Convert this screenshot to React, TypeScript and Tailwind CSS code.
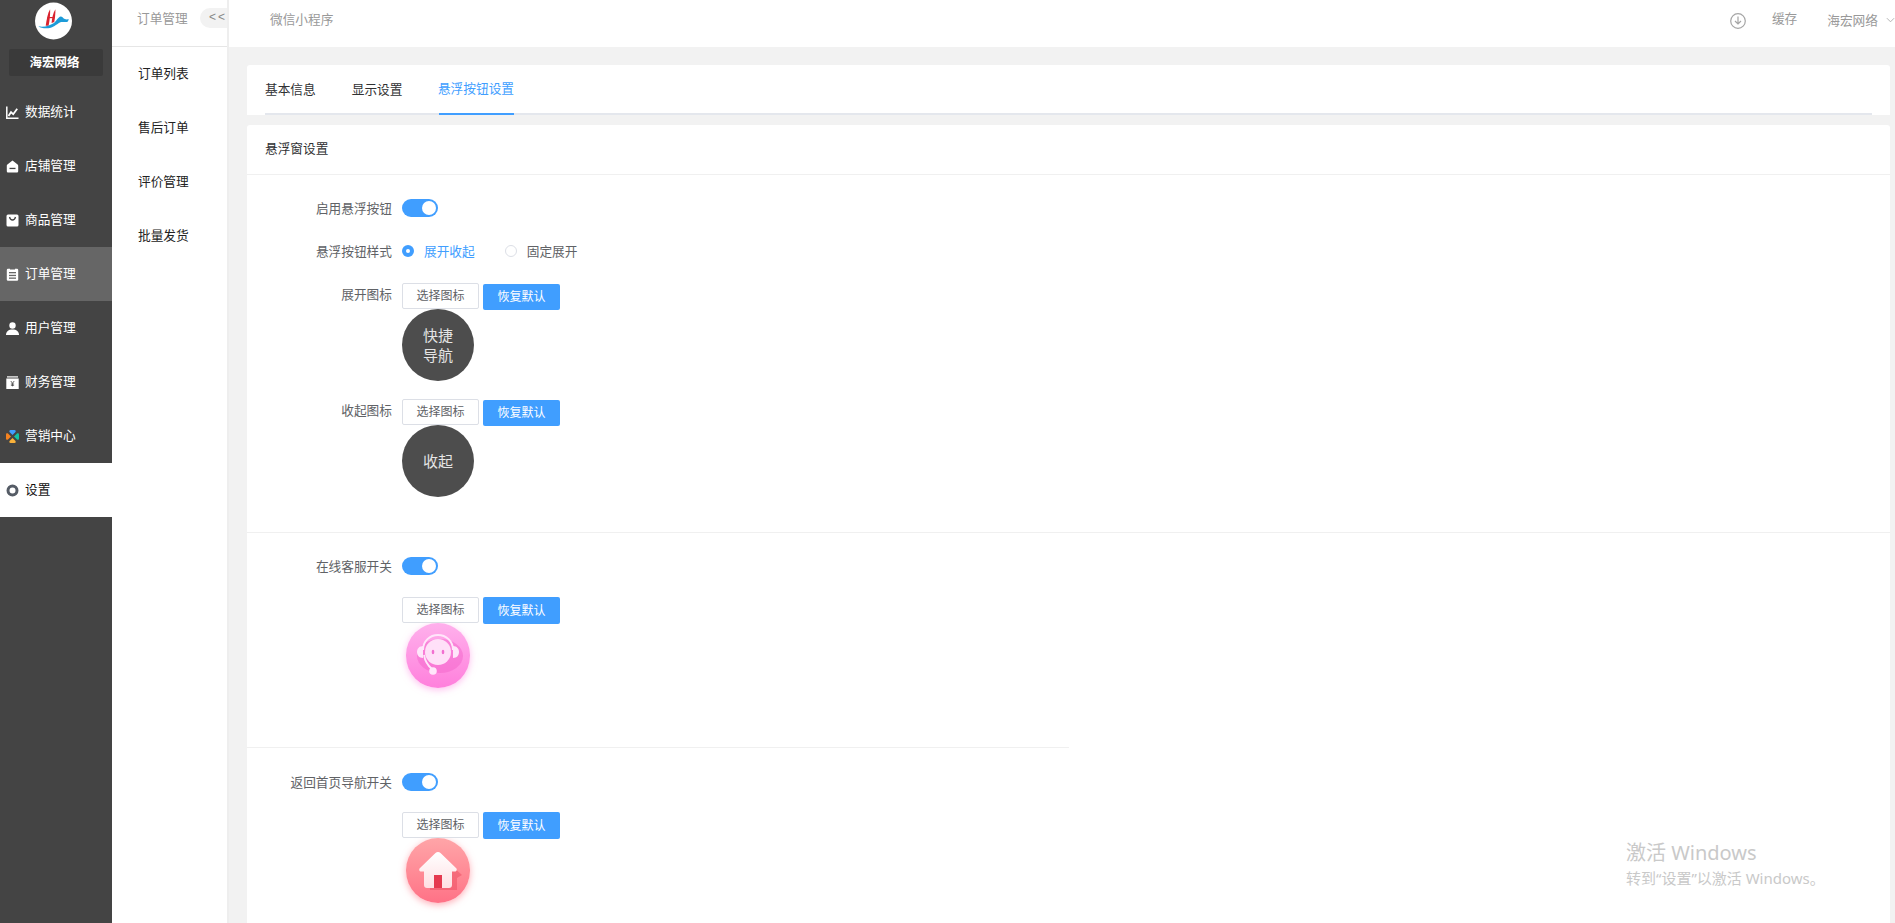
import type { ReactNode } from "react";

const cjk = "font-['Liberation_Sans','Noto_Sans_CJK_SC',sans-serif]";

function ChartIcon() {
  return (
    <svg viewBox="0 0 13 13" className="w-[13px] h-[13px]" fill="none" stroke="#fff">
      <path d="M.8.500v11.700h11.700" strokeWidth="1.500" />
      <path d="M2.500 10 5 6.200l2.200 2 4-5.500" strokeWidth="1.800" />
    </svg>
  );
}

function ShopIcon() {
  return (
    <svg viewBox="0 0 13 13" className="w-[13px] h-[13px]">
      <path d="M6.500.500 11 4c.8.600 1.200 1 1.200 2v5c0 1-.6 1.500-1.500 1.500H2.300C1.400 12.500.8 12 .8 11V6c0-1 .4-1.400 1.200-2z" fill="#fff" />
      <rect x="3.500" y="7.800" width="6" height="1.300" fill="#444" />
    </svg>
  );
}

function GoodsIcon() {
  return (
    <svg viewBox="0 0 13 13" className="w-[13px] h-[13px]">
      <rect x="0.500" y="0.500" width="12" height="12" rx="1.500" fill="#fff" />
      <path d="M3.500 3c.5 2 1.500 3 3 3s2.500-1 3-3" fill="none" stroke="#444" strokeWidth="1.300" />
    </svg>
  );
}

function OrderIcon() {
  return (
    <svg viewBox="0 0 13 13" className="w-[13px] h-[13px]">
      <rect x="0.800" y="0.800" width="11.400" height="12" rx="1.200" fill="#fff" />
      <rect x="4" y="0" width="5" height="1.500" fill="#666" />
      <rect x="3" y="4" width="7" height="1.300" fill="#666" />
      <rect x="3" y="6.800" width="7" height="1.300" fill="#666" />
      <rect x="3" y="9.500" width="7" height="1.300" fill="#666" />
    </svg>
  );
}

function UserIcon() {
  return (
    <svg viewBox="0 0 13 13" className="w-[13px] h-[13px]" fill="#fff">
      <circle cx="6.500" cy="3.500" r="3.200" />
      <path d="M0 13c0-3.500 2.500-5.500 6.500-5.500S13 9.500 13 13z" />
    </svg>
  );
}

function FinanceIcon() {
  return (
    <svg viewBox="0 0 13 13" className="w-[13px] h-[13px]">
      <rect x="1" y="0.300" width="11" height="1.200" fill="#fff" />
      <rect x="0.300" y="2.500" width="12.400" height="10.500" fill="#fff" />
      <path d="M4.800 5 6.500 7.300 8.200 5M6.500 7.300v3M4.900 8h3.200M4.900 9.300h3.200" fill="none" stroke="#444" strokeWidth=".8" />
    </svg>
  );
}

function MarketingIcon() {
  return (
    <svg viewBox="0 0 15 15" className="w-[15px] h-[15px] -ml-[1px] -mr-[1px]">
      <path d="M5.500 1h4c1.200 0 1.500 1 1 2L7.500 6 4.500 3c-.5-1 0-2 1-2z" fill="#409eff" />
      <path d="M14 5.500v4c0 1.200-1 1.500-2 1L9 7.500l3-3c1-.5 2 0 2 1z" fill="#13c2a3" />
      <path d="M5.500 14h4c1.200 0 1.500-1 1-2l-3-3-3 3c-.5 1 0 2 1 2z" fill="#f9b13a" />
      <path d="M1 5.500v4c0 1.200 1 1.500 2 1l3-3-3-3c-1-.5-2 0-2 1z" fill="#f5821f" />
    </svg>
  );
}

function SettingIcon() {
  return (
    <svg viewBox="0 0 13 13" className="w-[13px] h-[13px]" fill="none">
      <circle cx="6.500" cy="6.500" r="4.500" stroke="#555c66" strokeWidth="3" />
    </svg>
  );
}

function Logo() {
  return (
    <svg viewBox="0 0 38 38" className="w-[37px] h-[38px]">
      <circle cx="19" cy="19" r="19" fill="#fff" />
      <path d="M11 24C12 17 13 11 15.500 7c.3 5-.5 11-1.500 17z" fill="#d9232e" />
      <path d="M17 21c.5-5 1.500-10 4-14 0 5-.5 9-1.200 13z" fill="#d9232e" />
      <path d="M13 15.500h7" stroke="#d9232e" strokeWidth="1.200" />
      <path d="M3.500 24.500c6 1 11-.5 16-3.500 3-2 4-6 7-6.500 1.500 0 2 1.500 4 2.500 1.500.5 3 .5 4 0 0 1.500-.5 2.500-1.500 3-3 .5-5-.5-7.500.5-3.500 2-7 5.500-12 6-4 .3-8-.3-10-2z" fill="#1c9bd8" />
    </svg>
  );
}

const MENU: { label: string; icon: ReactNode; active?: boolean; current?: boolean }[] = [
  { label: "数据统计", icon: <ChartIcon /> },
  { label: "店铺管理", icon: <ShopIcon /> },
  { label: "商品管理", icon: <GoodsIcon /> },
  { label: "订单管理", icon: <OrderIcon />, active: true },
  { label: "用户管理", icon: <UserIcon /> },
  { label: "财务管理", icon: <FinanceIcon /> },
  { label: "营销中心", icon: <MarketingIcon /> },
  { label: "设置", icon: <SettingIcon />, current: true },
];

function Sidebar() {
  return (
    <aside className="w-[112px] shrink-0 bg-[#444444]">
      <div className="pl-[35px] pt-[2px]">
        <Logo />
      </div>
      <div className="mx-[9px] mt-[9px] h-[27px] rounded-[2px] bg-[#3a3a3a] flex items-center justify-center pr-[3px] pt-[1px] text-[12.5px] font-bold text-white">
        海宏网络
      </div>
      <nav className="mt-[9px]">
        {MENU.map((item) => (
          <div
            key={item.label}
            className={
              "h-[54px] flex items-center pl-[6px] gap-[6px] text-[12.7px] " +
              (item.current ? "bg-white text-[#111]" : item.active ? "bg-[#666666] text-white" : "text-white")
            }
          >
            {item.icon}
            <span className="translate-y-[1px]">{item.label}</span>
          </div>
        ))}
      </nav>
    </aside>
  );
}

function SubMenu() {
  return (
    <div className="w-[117px] shrink-0 bg-white border-r-2 border-[#eeeeee]">
      <div className="h-[47px] border-b border-[#e6e6e6] flex items-center justify-between pl-[25px] pb-[6px]">
        <span className="text-[12.7px] text-[#999]">订单管理</span>
        <span className="w-[27px] h-[20px] -mt-[5px] rounded-l-full bg-[#f2f2f2] text-[12px] text-[#888] tracking-[2px] pl-[9px] leading-[19px] font-['Liberation_Sans']">
          &lt;&lt;
        </span>
      </div>
      {["订单列表", "售后订单", "评价管理", "批量发货"].map((t) => (
        <div key={t} className="h-[54px] flex items-center pl-[26px] pt-[2px] text-[12.7px] text-[#222]">
          {t}
        </div>
      ))}
    </div>
  );
}

function Header() {
  return (
    <header className="h-[47px] shrink-0 bg-white flex items-center pl-[41px] pb-[6px] text-[12.7px] text-[#999]">
      <span>微信小程序</span>
      <div className="ml-auto flex items-center">
        <svg viewBox="0 0 16 16" className="w-[16px] h-[16px] mt-[2px]" fill="none" stroke="#a5a5a5" strokeWidth="1.200">
          <circle cx="8" cy="8" r="7.300" />
          <path d="M8 3.500v7M5 8l3 3 3-3" />
        </svg>
        <span className="ml-[26px] -mt-[2px]">缓存</span>
        <span className="ml-[30px] mt-[3px]">海宏网络</span>
        <svg viewBox="0 0 10 6" className="w-[9px] h-[6px] ml-[8px]" fill="none" stroke="#aaa" strokeWidth="1">
          <path d="M1 1l4 4 4-4" />
        </svg>
      </div>
    </header>
  );
}

function Tabs() {
  return (
    <div className="h-[50px] bg-white rounded-t-[3px] px-[18px] text-[12.7px] text-[#303133]">
      <div className="h-[50px] border-b-2 border-[#e4e7ed] flex">
        <div className="h-[50px] flex items-center pt-[2px]">基本信息</div>
        <div className="h-[50px] flex items-center pt-[2px] ml-[36px]">显示设置</div>
        <div className="h-[50px] flex items-center pt-[2px] ml-[36px] border-b-2 border-[#409eff] text-[#409eff] w-[75px] justify-center whitespace-nowrap">
          悬浮按钮设置
        </div>
      </div>
    </div>
  );
}

function Switch() {
  return (
    <div className="w-[36px] h-[18px] rounded-full bg-[#409eff] relative">
      <div className="absolute right-[2px] top-[2px] w-[14px] h-[14px] rounded-full bg-white" />
    </div>
  );
}

function Row({ label, children, className = "" }: { label?: string; children: ReactNode; className?: string }) {
  return (
    <div className={"flex " + className}>
      <div className="w-[145px] shrink-0 text-right text-[12.7px] text-[#606266] leading-[20px]">{label}</div>
      <div className="ml-[10px]">{children}</div>
    </div>
  );
}

function PickButtons({ offset }: { offset?: boolean }) {
  return (
    <div className="flex items-start h-[26px]">
      <div className="w-[77px] h-[26px] border border-[#dcdfe6] rounded-[2px] bg-white text-[12px] text-[#606266] flex items-center justify-center">
        选择图标
      </div>
      <div
        className={
          "w-[77px] ml-[4px] rounded-[2px] bg-[#409eff] text-[12px] text-white flex items-center justify-center " +
          (offset ? "h-[26px] mt-[1px]" : "h-[27px]")
        }
      >
        恢复默认
      </div>
    </div>
  );
}

function DarkCircle({ lines }: { lines: string[] }) {
  return (
    <div className="w-[72px] h-[72px] rounded-full bg-[#4d4d4d] text-[15px] leading-[20px] text-[#e5e5e5] flex flex-col items-center justify-center pt-[1px]">
      {lines.map((l) => (
        <span key={l}>{l}</span>
      ))}
    </div>
  );
}

function ServiceBadge() {
  return (
    <div className="w-[64px] h-[65px] ml-[4px] rounded-full bg-gradient-to-b from-[#ffb0ec] to-[#ff7fdc] shadow-[0_2px_7px_rgba(255,140,225,0.55)] flex items-center justify-center">
      <svg viewBox="0 0 64 64" className="w-[64px] h-[64px]">
        <ellipse cx="34" cy="32" rx="23" ry="17" fill="#f25fc8" opacity=".45" />
        <path d="M11 28c0-3 2-6 6-6v12c-4 0-6-3-6-6zM53 28c0-3-2-6-6-6v12c4 0 6-3 6-6z" fill="#ffe6fa" />
        <path d="M17 26c0-9 7-15 15-15s15 6 15 15" fill="none" stroke="#ffe6fa" strokeWidth="2" />
        <path d="M18 31c1 6 3 10 8 14" fill="none" stroke="#ffe6fa" strokeWidth="1.800" />
        <circle cx="27" cy="47" r="3.800" fill="#ffe6fa" />
        <rect x="19" y="15" width="26" height="26" rx="13" fill="#ffe0f8" />
        <ellipse cx="27" cy="28" rx="1.300" ry="2.200" fill="#f26fd0" />
        <ellipse cx="37" cy="28" rx="1.300" ry="2.200" fill="#f26fd0" />
      </svg>
    </div>
  );
}

function HomeBadge() {
  return (
    <div className="w-[64px] h-[65px] ml-[4px] rounded-full bg-gradient-to-b from-[#ffa5a8] to-[#ff7186] shadow-[0_2px_7px_rgba(255,110,125,0.55)] flex items-center justify-center">
      <svg viewBox="0 0 64 64" className="w-[64px] h-[64px]">
        <defs>
          <linearGradient id="homeFill" x1="0" y1="0" x2="0" y2="1">
            <stop offset="0" stopColor="#ffffff" />
            <stop offset="1" stopColor="#ffdfe3" />
          </linearGradient>
        </defs>
        <path d="M34 16 56 36l-5 3v12H24V30z" fill="#e8475c" opacity=".45" />
        <path
          d="M32 13c1 0 1.800.300 2.500 1l15.500 15c1.500 1.500.8 3.500-1.200 3.500H46v13.500c0 2-1.200 3-3 3H21c-1.800 0-3-1-3-3V32.500h-2.800c-2 0-2.700-2-1.200-3.500L29.500 14c.7-.7 1.500-1 2.500-1z"
          fill="url(#homeFill)"
        />
        <rect x="28" y="36" width="8" height="13" fill="#e5394f" />
      </svg>
    </div>
  );
}

function Settings() {
  return (
    <section className="mt-[10px] bg-white rounded-t-[3px] flex-1">
      <div className="h-[50px] border-b border-[#f0f0f0] flex items-center px-[18px] pt-[1px] text-[12.7px] text-[#303133]">
        悬浮窗设置
      </div>

      <div className="pt-[24px] pb-[35px] border-b border-[#f0f0f0]">
        <Row label="启用悬浮按钮" className="h-[18px]">
          <Switch />
        </Row>
        <Row label="悬浮按钮样式" className="mt-[25px] h-[18px]">
          <div className="flex items-center h-[18px] text-[12.7px] leading-[20px]">
            <span className="w-[12px] h-[12px] rounded-full bg-[#409eff] flex items-center justify-center">
              <span className="w-[4px] h-[4px] rounded-full bg-white" />
            </span>
            <span className="ml-[10px] text-[#409eff] translate-y-[1px]">展开收起</span>
            <span className="ml-[30px] w-[12px] h-[12px] rounded-full border border-[#dcdfe6] bg-white" />
            <span className="ml-[10px] text-[#606266] translate-y-[1px]">固定展开</span>
          </div>
        </Row>
        <Row label="展开图标" className="mt-[23px] [&>div:first-child]:leading-[24px]">
          <PickButtons offset />
          <DarkCircle lines={["快捷", "导航"]} />
        </Row>
        <Row label="收起图标" className="mt-[18px] [&>div:first-child]:leading-[24px]">
          <PickButtons offset />
          <DarkCircle lines={["收起"]} />
        </Row>
      </div>

      <div className="pt-[24px]">
        <Row label="在线客服开关" className="h-[18px]">
          <Switch />
        </Row>
        <Row className="mt-[22px]">
          <PickButtons />
          <ServiceBadge />
        </Row>
      </div>
      <div className="mt-[59px] border-t border-[#f0f0f0] w-[822px]" />

      <div className="pt-[25px]">
        <Row label="返回首页导航开关" className="h-[18px]">
          <Switch />
        </Row>
        <Row className="mt-[21px]">
          <PickButtons />
          <HomeBadge />
        </Row>
      </div>
    </section>
  );
}

export default function App() {
  return (
    <div className={"w-[1895px] h-[923px] overflow-hidden flex relative bg-white " + cjk}>
      <Sidebar />
      <SubMenu />
      <div className="flex-1 min-w-0 flex flex-col bg-[#f2f2f2]">
        <Header />
        <main className="flex-1 min-h-0 pt-[18px] pl-[18px] pr-[5px] flex flex-col">
          <Tabs />
          <Settings />
        </main>
      </div>
      <div className="absolute left-[1626px] top-[838px] text-[#c9c9c9] pointer-events-none font-['Noto_Sans','Noto_Sans_CJK_SC',sans-serif]">
        <div className="text-[20px] leading-[30px]">激活 Windows</div>
        <div className="text-[15px] leading-[20px]">转到“设置”以激活 Windows。</div>
      </div>
    </div>
  );
}
